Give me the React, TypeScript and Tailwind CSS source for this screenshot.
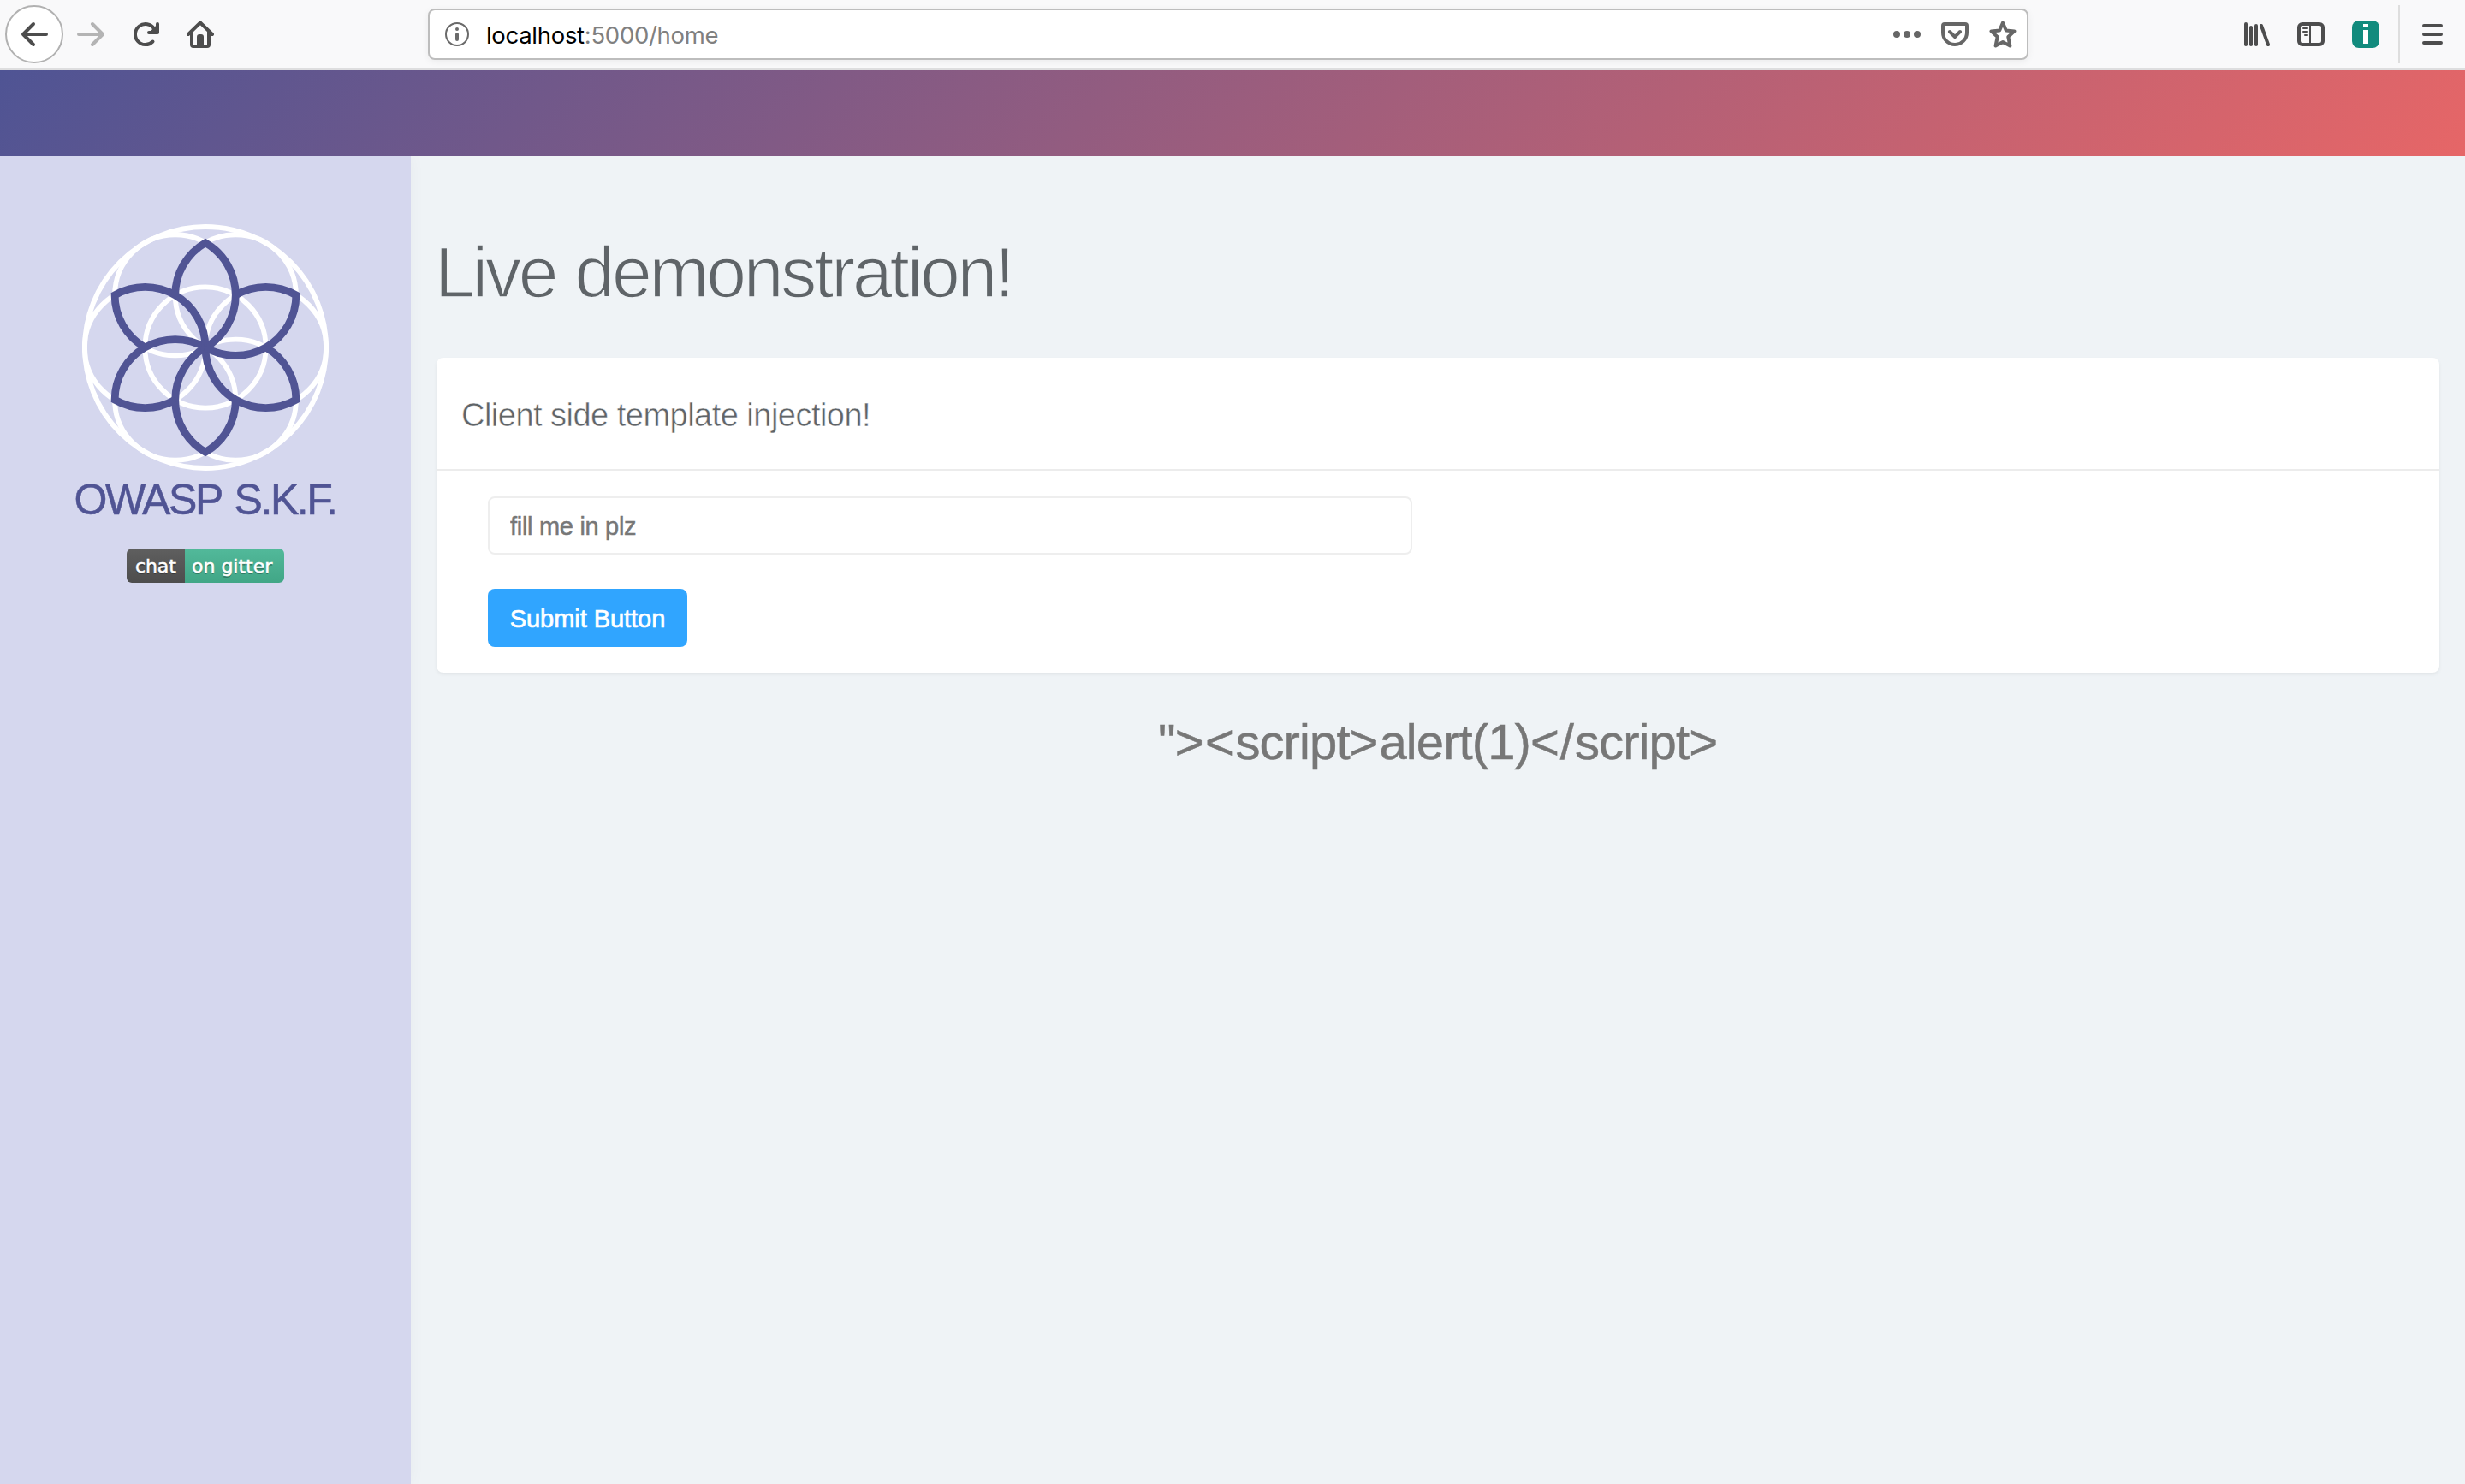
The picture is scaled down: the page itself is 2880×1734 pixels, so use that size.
import React from "react";

const NAVY = "#505494";
const CX = 160;
const CY = 156;
const R = 70.6;

const rad = (deg: number) => (deg * Math.PI) / 180;
const pt = (r: number, deg: number) => ({
  x: CX + r * Math.cos(rad(deg)),
  y: CY + r * Math.sin(rad(deg)),
});

/* Flower of six petals over a ring of overlapping circles */
function Logo() {
  const centers = [0, 60, 120, 180, 240, 300].map((d) => pt(R, d));
  const tips = [30, 90, 150, 210, 270, 330];
  return (
    <svg viewBox="16 12 288 288" className="block h-[288px] w-[288px]" fill="none">
      <g stroke="#fff" strokeWidth={5.8}>
        <circle cx={CX} cy={CY} r={141} />
        {centers.map((c, i) => (
          <circle key={i} cx={c.x} cy={c.y} r={R} />
        ))}
        <circle cx={CX} cy={CY} r={R} />
      </g>
      <g stroke={NAVY} strokeWidth={8.8} strokeLinejoin="miter">
        {tips.map((deg) => {
          const tip = pt(R * Math.sqrt(3), deg);
          const near = pt(R, deg + 30);
          const far = pt(R, deg - 30);
          return (
            <path
              key={deg}
              d={`M${CX} ${CY}A${R} ${R} 0 0 0 ${near.x} ${near.y}A${R} ${R} 0 0 0 ${tip.x} ${tip.y}A${R} ${R} 0 0 0 ${far.x} ${far.y}`}
            />
          );
        })}
      </g>
    </svg>
  );
}

const ink = "#4d4d4d";

function BrowserBar() {
  return (
    <header className="flex h-[82px] items-center border-b-2 border-[#dededf] bg-[#f9f9fa] pl-[6px]">
      <div className="flex h-[68px] w-[68px] items-center justify-center rounded-full border-2 border-[#b1b1b1] bg-white">
        <svg viewBox="0 0 32 32" className="h-8 w-8" fill="none" stroke={ink} strokeWidth={4} strokeLinecap="round" strokeLinejoin="round">
          <path d="M30 16H3M15 4L3 16L15 28" />
        </svg>
      </div>
      <svg viewBox="0 0 32 32" className="ml-4 h-8 w-8" fill="none" stroke="#b4b4b4" strokeWidth={4} strokeLinecap="round" strokeLinejoin="round">
        <path d="M2 16H29M18 4L30 16L18 28" />
      </svg>
      <svg viewBox="0 0 32 32" className="ml-8 h-8 w-8" fill="none" stroke={ink} strokeWidth={4} strokeLinecap="round" strokeLinejoin="round">
        <path d="M24.500 24.500A12 12 0 1 1 26 9.500" />
        <path d="M30 4V14H20" />
        <path d="M29 8V13H24Z" fill={ink} />
      </svg>
      <svg viewBox="0 0 32 32" className="ml-8 h-8 w-8" fill="none" stroke={ink} strokeWidth={4} strokeLinecap="round" strokeLinejoin="round">
        <path d="M2 16L16 2.500L30 16" />
        <path d="M6 13V28Q6 30 8 30H24Q26 30 26 28V13" />
        <path d="M12 30V19Q12 16 15 16H17Q20 16 20 19V30H18V24H16V22H18V24H16V30Z" fill={ink} stroke="none" />
        <path d="M16 24H18V30H16Z" fill={ink} stroke="none" />
      </svg>

      <div className="ml-[250px] flex h-[60px] w-[1870px] items-center rounded-lg border-2 border-[#bdbdbd] bg-white pl-[18px] pr-3 shadow-[0_2px_8px_rgba(0,0,0,0.06)]">
        <svg viewBox="0 0 28 28" className="h-7 w-7" fill="none">
          <circle cx="14" cy="14" r="13" stroke="#6a6a6a" strokeWidth="2" />
          <circle cx="14" cy="8" r="2" fill="#6a6a6a" />
          <path d="M14 14V20" stroke="#6a6a6a" strokeWidth="4" strokeLinecap="round" />
        </svg>
        <div className="ml-[20px] pt-[3px] font-['Inter',sans-serif] text-[27.500px] leading-none tracking-[-0.300px] text-[#808080]">
          <span className="text-black">localhost</span>:5000/home
        </div>
        <div className="ml-auto flex items-center">
          <svg viewBox="0 0 32 8" className="h-2 w-8" fill="#666">
            <circle cx="4" cy="4" r="4" />
            <circle cx="16" cy="4" r="4" />
            <circle cx="28" cy="4" r="4" />
          </svg>
          <svg viewBox="0 0 32 32" className="ml-6 h-8 w-8" fill="none" stroke="#666" strokeWidth={4} strokeLinecap="round" strokeLinejoin="round">
            <path d="M4 4H28Q30 4 30 6V14A14 14 0 0 1 2 14V6Q2 4 4 4Z" />
            <path d="M10 13L16 19L22 13" />
          </svg>
          <svg viewBox="0 0 32 32" className="ml-6 h-8 w-8" fill="none" stroke="#666" strokeWidth={4} strokeLinejoin="round">
            <path d="M16 2.500L19.800 11.500L29.500 12.400L22.300 19L24.400 29.500L16 25L7.600 29.500L9.700 19L2.500 12.400L12.200 11.500Z" />
          </svg>
        </div>
      </div>

      <div className="ml-[252px] flex items-center">
        <svg viewBox="0 0 30 28" className="h-7 w-[30px]" stroke={ink} strokeWidth={4} strokeLinecap="round">
          <path d="M2 2V26M8 6V26M14 4V26M20 4L28 26" />
        </svg>
        <svg viewBox="0 0 32 28" className="ml-8 h-7 w-8" fill="none" stroke={ink}>
          <rect x="2" y="2" width="28" height="24" rx="4" strokeWidth="4" />
          <path d="M15 3V25" strokeWidth="2" />
          <path d="M7 7H11M7 11H11M9 15H11" strokeWidth="2" strokeLinecap="round" />
        </svg>
        <div className="ml-8 flex h-8 w-8 flex-col items-center rounded-lg bg-[#128b7d] pt-1">
          <span className="h-1 w-[6px] bg-white" />
          <span className="mt-[3px] h-4 w-[6px] bg-white" />
        </div>
        <div className="ml-[22px] h-[68px] w-[2px] bg-[#dedede]" />
        <svg viewBox="0 0 24 24" className="ml-[26px] h-6 w-6" stroke={ink} strokeWidth={4} strokeLinecap="round">
          <path d="M2 2H22M2 12H22M2 22H22" />
        </svg>
      </div>
    </header>
  );
}

function Sidebar() {
  return (
    <aside className="flex w-[480px] shrink-0 flex-col items-center bg-[#d5d7ee] pt-[80px] shadow-[2px_0_16px_rgba(0,0,0,0.03)]">
      <Logo />
      <div className="mt-[6px] pr-[1px] text-[50px] leading-[56px] tracking-[-2.400px] text-[#505494] [word-spacing:4px] [-webkit-text-stroke:0.500px_#505494]">OWASP S.K.F.</div>
      <div className="mt-[29px] flex h-10 overflow-hidden rounded-md font-['DejaVu_Sans',sans-serif] text-[22px] leading-[41px] text-white [-webkit-text-stroke:0.500px_#fff] [text-shadow:0_2px_0_rgba(1,1,1,0.3)]">
        <span className="w-[68px] bg-linear-to-b from-[#5f5f5f] to-[#4d4d4d] pl-[10px] tracking-[-0.100px]">chat</span>
        <span className="w-[116px] bg-linear-to-b from-[#52b99a] to-[#41a686] pl-[8px]">on gitter</span>
      </div>
    </aside>
  );
}

export default function App() {
  return (
    <div className="flex h-[1734px] w-[2880px] flex-col overflow-hidden bg-[#eff3f6] font-['Liberation_Sans',Arial,sans-serif]">
      <BrowserBar />
      <div className="z-10 h-[100px] shrink-0 bg-[linear-gradient(135deg,#4f5494_0%,#e66667_100%)]" />
      <div className="flex flex-1">
        <Sidebar />
        <main className="flex-1 pl-[30px] pr-[30px]">
          <h1 className="-ml-[2px] mt-[88px] text-[84px] leading-[96px] tracking-[-3.200px] text-[#5f6468] [word-spacing:2px] [-webkit-text-stroke:1.500px_#eff3f6]">
            Live demonstration!
          </h1>
          <section className="mt-[52px] h-[368px] rounded-lg bg-white shadow-[0_2px_4px_rgba(0,0,0,0.06)]">
            <div className="h-[132px] border-b-2 border-[#ececec] pl-[29px] pt-[45px] text-[38px] leading-[44px] tracking-[-0.520px] text-[#5f6468] [-webkit-text-stroke:0.500px_#fff]">
              Client side template injection!
            </div>
            <form className="pl-[60px] pt-[30px]" onSubmit={(e) => e.preventDefault()}>
              <input
                placeholder="fill me in plz"
                className="block h-[68px] w-[1080px] rounded-lg border-2 border-[#eee] bg-white px-[24px] pt-[3px] text-[29px] tracking-[-0.300px] placeholder:text-[#777] [-webkit-text-stroke:0.500px_#777]"
              />
              <button className="mt-10 block h-[68px] w-[233px] rounded-lg bg-[#30a5ff] pt-[3px] text-[29px] tracking-[-0.050px] text-white [-webkit-text-stroke:0.700px_#fff]">
                Submit Button
              </button>
            </form>
          </section>
          <p className="mt-[47px] pl-[1px] text-center text-[58px] leading-[68px] tracking-[-0.900px] text-[#777] [-webkit-text-stroke:0.500px_#777]">
            {'"'}
            <span className="tracking-[1.500px]">{"><"}</span>script<span className="tracking-[1px]">{">"}</span>alert(1)
            <span className="tracking-[1px]">{"</"}</span>script<span className="tracking-[1px]">{">"}</span>
          </p>
        </main>
      </div>
    </div>
  );
}
